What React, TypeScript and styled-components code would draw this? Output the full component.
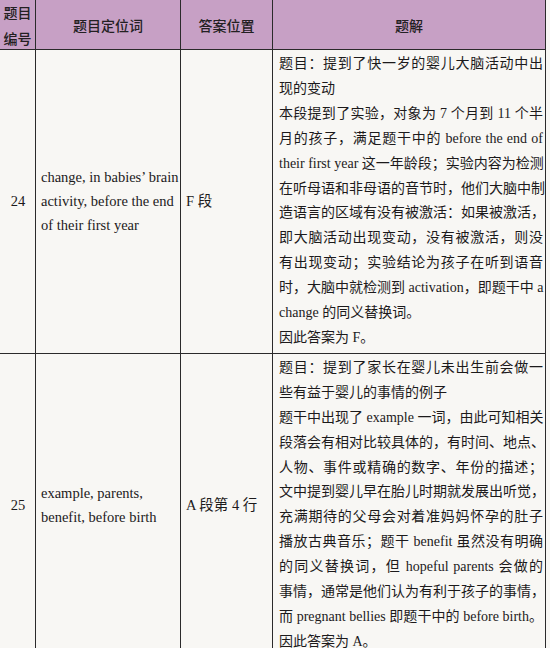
import React from "react";
import styled, { createGlobalStyle } from "styled-components";

type Row = {
  no: string;
  words: string[];
  place: string;
  lines: { text: string; end?: boolean }[];
};

const rows: Row[] = [
  {
    no: "24",
    words: ["change, in babies’ brain", "activity, before the end", "of their first year"],
    place: "F 段",
    lines: [
      { text: "题目：提到了快一岁的婴儿大脑活动中出" },
      { text: "现的变动", end: true },
      { text: "本段提到了实验，对象为 7 个月到 11 个半" },
      { text: "月的孩子，满足题干中的 before the end of" },
      { text: "their first year 这一年龄段；实验内容为检测" },
      { text: "在听母语和非母语的音节时，他们大脑中制" },
      { text: "造语言的区域有没有被激活：如果被激活，" },
      { text: "即大脑活动出现变动，没有被激活，则没" },
      { text: "有出现变动；实验结论为孩子在听到语音" },
      { text: "时，大脑中就检测到 activation，即题干中 a" },
      { text: "change 的同义替换词。", end: true },
      { text: "因此答案为 F。", end: true },
    ],
  },
  {
    no: "25",
    words: ["example, parents,", "benefit, before birth"],
    place: "A 段第 4 行",
    lines: [
      { text: "题目：提到了家长在婴儿未出生前会做一" },
      { text: "些有益于婴儿的事情的例子", end: true },
      { text: "题干中出现了 example 一词，由此可知相关" },
      { text: "段落会有相对比较具体的，有时间、地点、" },
      { text: "人物、事件或精确的数字、年份的描述；" },
      { text: "文中提到婴儿早在胎儿时期就发展出听觉，" },
      { text: "充满期待的父母会对着准妈妈怀孕的肚子" },
      { text: "播放古典音乐；题干 benefit 虽然没有明确" },
      { text: "的同义替换词，但 hopeful parents 会做的" },
      { text: "事情，通常是他们认为有利于孩子的事情，" },
      { text: "而 pregnant bellies 即题干中的 before birth。" },
      { text: "因此答案为 A。", end: true },
    ],
  },
];

const App = () => {
  return (
    <>
      <GlobalStyle />
      <Table>
        <HeadCell>
          <span>题目</span>
          <span>编号</span>
        </HeadCell>
        <HeadCell>题目定位词</HeadCell>
        <HeadCell>答案位置</HeadCell>
        <HeadCell $last>题解</HeadCell>

        {rows.map((row) => (
          <React.Fragment key={row.no}>
            <Cell $center>{row.no}</Cell>
            <Cell>
              {row.words.map((w) => (
                <Word key={w}>{w}</Word>
              ))}
            </Cell>
            <Cell>{row.place}</Cell>
            <Explain>
              {row.lines.map((l, i) => (
                <Line key={i} $end={l.end}>
                  {l.text}
                </Line>
              ))}
            </Explain>
          </React.Fragment>
        ))}
      </Table>
    </>
  );
};

export default App;

const GlobalStyle = createGlobalStyle`
  html, body {
    margin: 0;
    padding: 0;
    background: #f8f7f4;
  }
  body {
    font-family: "Liberation Serif", "Noto Sans CJK SC", serif;
    color: #1c1a1b;
    width: 550px;
    height: 648px;
    overflow: hidden;
  }
`;

const Table = styled.div`
  display: grid;
  grid-template-columns: 36px 145px 92px 273px;
  width: 546px;
`;

const HeadCell = styled.div<{ $last?: boolean }>`
  height: 50px;
  box-sizing: border-box;
  display: flex;
  flex-direction: column;
  align-items: center;
  justify-content: center;
  gap: 4px;
  background: #c7a0c5;
  border-right: 1.5px solid #2b2a2b;
  border-bottom: 1.5px solid #2b2a2b;
  font-family: "Noto Sans CJK SC", sans-serif;
  font-size: 14px;
  font-weight: 500;
  line-height: 22px;
  color: #232022;

  span {
    display: block;
    line-height: 22px;
  }
`;

const Cell = styled.div<{ $center?: boolean }>`
  box-sizing: border-box;
  display: flex;
  flex-direction: column;
  justify-content: center;
  align-items: ${(p) => (p.$center ? "center" : "flex-start")};
  padding: 0 4px 0 5px;
  border-right: 1.5px solid #2b2a2b;
  border-bottom: 1.5px solid #2b2a2b;
  font-size: 14.5px;
  line-height: 24px;
`;

const Word = styled.div`
  white-space: nowrap;
`;

const Explain = styled.div`
  box-sizing: border-box;
  padding: 2px 2px 2px 6px;
  border-right: 1.5px solid #2b2a2b;
  border-bottom: 1.5px solid #2b2a2b;
  font-size: 14px;
  line-height: 24.9px;
`;

const Line = styled.div<{ $end?: boolean }>`
  white-space: nowrap;
  text-align: justify;
  text-align-last: ${(p) => (p.$end ? "left" : "justify")};
`;
